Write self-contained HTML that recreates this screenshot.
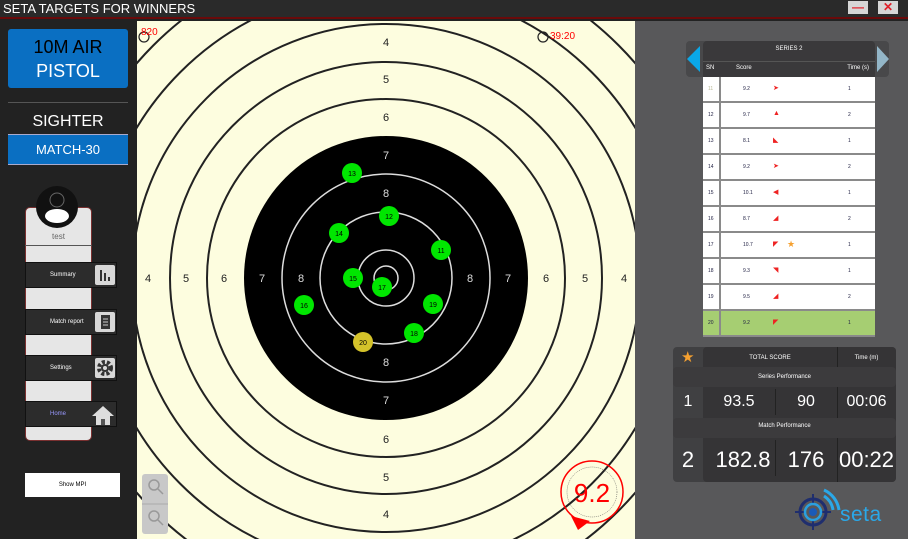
<!DOCTYPE html>
<html><head><meta charset="utf-8"><style>
*{margin:0;padding:0;box-sizing:border-box}
html,body{overflow:hidden}
body{width:908px;height:539px;background:#222;font-family:"Liberation Sans",sans-serif;position:relative}
.a{position:absolute}
.title{left:0;top:0;width:908px;height:19px;background:#2a2a2a;border-bottom:2px solid #6a0a0a;color:#fff;font-size:13px;line-height:17px;padding-left:3px}
.wb{top:1px;width:20px;height:13px;background:#d6d6d6;color:#e0202a;font-size:12px;line-height:13px;text-align:center;font-weight:bold}
.blue{background:#0a6fc2;color:#fff;text-align:center}
.btn{left:25px;width:92px;height:26px;background:#2c2c2c;border:1px solid #111;color:#fff;font-size:6px;line-height:24px;padding-left:24px}
.ic{position:absolute;right:1px;top:2px;width:20px;height:20px;background:#d8d8d8;border-radius:2px}
.row{left:703px;width:172px;height:26px;background:#fff;border-bottom:2px solid #8a8a8a;font-size:5px;color:#224}
.row span{position:absolute;top:9px}
.hd{background:#3a393b;color:#fff;font-size:6px;text-align:center}
.big{color:#fff;text-align:center;position:absolute}
</style></head><body>
<div class="a title">SETA TARGETS FOR WINNERS</div>
<div class="a wb" style="left:848px">—</div>
<div class="a wb" style="left:878px">✕</div>
<div class="a" style="left:0;top:21px;width:137px;height:518px;background:#222"></div>
<div class="a" style="left:635px;top:21px;width:273px;height:518px;background:#58585a"></div>

<div class="a blue" style="left:8px;top:29px;width:120px;height:59px;border-radius:3px;font-size:18px;line-height:24px;padding-top:6px"><span style="color:#000">10M AIR</span><br>PISTOL</div>
<div class="a" style="left:8px;top:102px;width:120px;height:1px;background:#555"></div>
<div class="a" style="left:8px;top:113px;width:120px;color:#fff;font-size:16px;text-align:center">SIGHTER</div>
<div class="a blue" style="left:8px;top:134px;width:120px;height:31px;border-top:1px solid #aac;border-bottom:1px solid #aac;font-size:13px;line-height:30px">MATCH-30</div>

<div class="a" style="left:25px;top:207px;width:67px;height:234px;background:#e6e6e6;border:1px solid #7a3030;border-radius:5px"></div>
<div class="a" style="left:25px;top:245px;width:67px;height:1px;background:#555"></div>
<svg class="a" style="left:35px;top:185px" width="44" height="44"><circle cx="22" cy="22" r="21" fill="#111"/><circle cx="22" cy="15" r="7" fill="#111" stroke="#666" stroke-width="1"/><ellipse cx="22" cy="31" rx="12" ry="7" fill="#fff"/></svg>
<div class="a" style="left:25px;top:232px;width:67px;text-align:center;color:#666;font-size:8px">test</div>
<div class="a btn" style="top:262px">Summary<div class="ic"><svg width="20" height="20"><rect x="5" y="5" width="2" height="11" fill="#333"/><rect x="9" y="8" width="2" height="8" fill="#333"/><rect x="13" y="12" width="2" height="4" fill="#333"/></svg></div></div>
<div class="a btn" style="top:309px">Match report<div class="ic"><svg width="20" height="20"><rect x="6" y="3" width="9" height="14" fill="#333"/><g stroke="#ccc"><line x1="8" y1="7" x2="13" y2="7"/><line x1="8" y1="10" x2="13" y2="10"/><line x1="8" y1="13" x2="13" y2="13"/></g></svg></div></div>
<div class="a btn" style="top:355px">Settings<div class="ic"><svg width="20" height="20"><circle cx="10" cy="10" r="6" fill="none" stroke="#333" stroke-width="4" stroke-dasharray="3 2"/><circle cx="10" cy="10" r="4" fill="#333"/><circle cx="10" cy="10" r="2" fill="#d8d8d8"/></svg></div></div>
<div class="a btn" style="top:401px;color:#99f">Home<div class="ic" style="background:none"><svg width="24" height="22" style="margin-left:-4px"><path d="M1 12 L12 2 L23 12 Z" fill="#ddd"/><rect x="5" y="11" width="14" height="10" fill="#ddd"/><rect x="10" y="15" width="4" height="6" fill="#555"/></svg></div></div>
<div class="a" style="left:25px;top:473px;width:95px;height:24px;background:#fff;font-size:6px;text-align:center;line-height:24px">Show MPI</div>

<svg class="a" style="left:137px;top:21px" width="498" height="518" viewBox="137 21 498 518">
<rect x="137" y="21" width="498" height="518" fill="#fdfddf"/>
<g fill="none" stroke="#222" stroke-width="2">
<circle cx="386" cy="278" r="366"/><circle cx="386" cy="278" r="329"/><circle cx="386" cy="278" r="291"/><circle cx="386" cy="278" r="254"/><circle cx="386" cy="278" r="216"/><circle cx="386" cy="278" r="179"/>
</g>
<circle cx="386" cy="278" r="142" fill="#000"/>
<g fill="none" stroke="#ddd" stroke-width="1.5">
<circle cx="386" cy="278" r="104"/><circle cx="386" cy="278" r="66"/><circle cx="386" cy="278" r="28"/><circle cx="386" cy="278" r="12"/>
</g>
<g font-size="11" text-anchor="middle" fill="#222">
<text x="386" y="46">4</text><text x="386" y="83">5</text><text x="386" y="121">6</text>
<text x="386" y="518">4</text><text x="386" y="481">5</text><text x="386" y="443">6</text>
<text x="148" y="282">4</text><text x="186" y="282">5</text><text x="224" y="282">6</text>
<text x="624" y="282">4</text><text x="585" y="282">5</text><text x="546" y="282">6</text>
</g>
<g font-size="11" text-anchor="middle" fill="#ddd">
<text x="386" y="159">7</text><text x="386" y="404">7</text><text x="262" y="282">7</text><text x="508" y="282">7</text>
<text x="386" y="197">8</text><text x="386" y="366">8</text><text x="301" y="282">8</text><text x="470" y="282">8</text>
</g>
<g fill="#00e600">
<circle cx="352" cy="173" r="10"/><circle cx="389" cy="216" r="10"/><circle cx="339" cy="233" r="10"/><circle cx="441" cy="250" r="10"/><circle cx="353" cy="278" r="10"/><circle cx="382" cy="287" r="10"/><circle cx="304" cy="305" r="10"/><circle cx="433" cy="304" r="10"/><circle cx="414" cy="333" r="10"/>
</g>
<circle cx="363" cy="342" r="10" fill="#d4c22a"/>
<g font-size="7" text-anchor="middle" fill="#000">
<text x="352" y="176">13</text><text x="389" y="219">12</text><text x="339" y="236">14</text><text x="441" y="253">11</text><text x="353" y="281">15</text><text x="382" y="290">17</text><text x="304" y="308">16</text><text x="433" y="307">19</text><text x="414" y="336">18</text><text x="363" y="345">20</text>
</g>
<g fill="none" stroke="#222" stroke-width="1.2"><circle cx="144" cy="37" r="5"/><circle cx="543" cy="37" r="5"/></g>
<text x="141" y="35" font-size="10" fill="#f00">820</text>
<text x="550" y="39" font-size="10" fill="#f00">39:20</text>
<circle cx="592" cy="492" r="31" fill="none" stroke="#f00" stroke-width="1.5"/>
<circle cx="592" cy="492" r="25" fill="none" stroke="#444" stroke-width="0.5" stroke-dasharray="1 1"/>
<path d="M571 516 L590 521 L578 530 Z" fill="#f00"/>
<text x="592" y="502" font-size="26" text-anchor="middle" fill="#f00">9.2</text>
<rect x="142" y="474" width="26" height="60" rx="3" fill="#c8c8c8"/>
<line x1="142" y1="504" x2="168" y2="504" stroke="#aaa"/>
<g fill="none" stroke="#999" stroke-width="1.5"><circle cx="154" cy="485" r="5"/><line x1="158" y1="489" x2="163" y2="494"/><circle cx="154" cy="516" r="5"/><line x1="158" y1="520" x2="163" y2="525"/></g>
</svg>

<div class="a" style="left:686px;top:41px;width:203px;height:36px;background:#48484a;border-radius:4px"></div>
<div class="a hd" style="left:703px;top:41px;width:172px;height:36px;border-radius:4px 4px 0 0"><div style="padding-top:5px">SERIES 2</div><div style="border-top:1px solid #555;margin-top:9px;text-align:left;padding-left:3px;position:relative;height:12px;line-height:12px">SN<span style="position:absolute;left:33px">Score</span><span style="position:absolute;right:6px">Time (s)</span></div></div>
<svg class="a" style="left:686px;top:46px" width="204" height="26"><path d="M14 0 L14 26 L1 13 Z" fill="#0aa8e8"/><path d="M191 0 L191 26 L203 13 Z" fill="#93b6c8"/></svg>
<div class="a" style="left:703px;top:77px;width:172px;height:259px;background:#fff"></div>
<div class="a row" style="top:77px"><span style="left:5px;color:#bb9">11</span><span style="left:40px">9.2</span><span style="left:70px;color:#e22;top:7px;font-size:7px">➤</span><span style="left:145px">1</span></div>
<div class="a row" style="top:103px"><span style="left:5px">12</span><span style="left:40px">9.7</span><span style="left:70px;color:#e22;top:7px;font-size:7px">▲</span><span style="left:145px">2</span></div>
<div class="a row" style="top:129px"><span style="left:5px">13</span><span style="left:40px">8.1</span><span style="left:70px;color:#e22;top:7px;font-size:7px">◣</span><span style="left:145px">1</span></div>
<div class="a row" style="top:155px"><span style="left:5px">14</span><span style="left:40px">9.2</span><span style="left:70px;color:#e22;top:7px;font-size:7px">➤</span><span style="left:145px">2</span></div>
<div class="a row" style="top:181px"><span style="left:5px">15</span><span style="left:40px">10.1</span><span style="left:70px;color:#e22;top:7px;font-size:7px">◀</span><span style="left:145px">1</span></div>
<div class="a row" style="top:207px"><span style="left:5px">16</span><span style="left:40px">8.7</span><span style="left:70px;color:#e22;top:7px;font-size:7px">◢</span><span style="left:145px">2</span></div>
<div class="a row" style="top:233px"><span style="left:5px">17</span><span style="left:40px">10.7</span><span style="left:70px;color:#e22;top:7px;font-size:7px">◤</span><span style="left:84px;color:#f5a030;top:6px;font-size:9px">★</span><span style="left:145px">1</span></div>
<div class="a row" style="top:259px"><span style="left:5px">18</span><span style="left:40px">9.3</span><span style="left:70px;color:#e22;top:7px;font-size:7px">◥</span><span style="left:145px">1</span></div>
<div class="a row" style="top:285px"><span style="left:5px">19</span><span style="left:40px">9.5</span><span style="left:70px;color:#e22;top:7px;font-size:7px">◢</span><span style="left:145px">2</span></div>
<div class="a row" style="top:311px;background:#a6ce72"><span style="left:5px">20</span><span style="left:40px">9.2</span><span style="left:70px;color:#e22;top:7px;font-size:7px">◤</span><span style="left:145px">1</span></div>
<div class="a" style="left:719px;top:77px;width:2px;height:259px;background:#8a8a8a"></div>

<div class="a" style="left:673px;top:347px;width:223px;height:135px;background:#404042;border-radius:4px"></div>
<div class="a" style="left:703px;top:347px;width:193px;height:135px;background:#353436;border-radius:4px"></div>
<div class="a" style="left:681px;top:348px;color:#f5a030;font-size:15px">★</div>
<div class="a hd" style="left:703px;top:355px;width:134px;background:none">TOTAL SCORE</div>
<div class="a hd" style="left:837px;top:355px;width:59px;background:none">Time (m)</div>
<div class="a" style="left:837px;top:347px;width:1px;height:20px;background:#222"></div>
<div class="a hd" style="left:673px;top:367px;width:223px;height:20px;line-height:20px;background:#3c3b3d;border-radius:4px">Series Performance</div>
<div class="big" style="left:673px;top:393px;width:30px;font-size:16px">1</div>
<div class="big" style="left:703px;top:393px;width:72px;font-size:16px">93.5</div>
<div class="big" style="left:775px;top:393px;width:62px;font-size:16px">90</div>
<div class="big" style="left:837px;top:393px;width:59px;font-size:16px">00:06</div>
<div class="a" style="left:775px;top:389px;width:1px;height:26px;background:#222"></div>
<div class="a" style="left:837px;top:387px;width:1px;height:31px;background:#222"></div>
<div class="a hd" style="left:673px;top:418px;width:223px;height:20px;line-height:16px;background:#3c3b3d;border-radius:4px">Match Performance</div>
<div class="big" style="left:673px;top:447px;width:30px;font-size:22px">2</div>
<div class="big" style="left:703px;top:447px;width:80px;font-size:22px">182.8</div>
<div class="big" style="left:775px;top:447px;width:62px;font-size:22px">176</div>
<div class="big" style="left:837px;top:447px;width:59px;font-size:22px">00:22</div>
<div class="a" style="left:775px;top:440px;width:1px;height:36px;background:#222"></div>
<div class="a" style="left:837px;top:438px;width:1px;height:44px;background:#222"></div>

<svg class="a" style="left:793px;top:488px" width="110" height="46">
<g stroke="#1f2e6e" stroke-width="2"><line x1="20" y1="6" x2="20" y2="42"/><line x1="2" y1="24" x2="38" y2="24"/></g>
<circle cx="20" cy="24" r="13" fill="none" stroke="#1f2e6e" stroke-width="3"/>
<circle cx="20" cy="24" r="8" fill="#58585a" stroke="#2aa0e0" stroke-width="2.5"/>
<circle cx="20" cy="24" r="4" fill="#1a5ab8"/>
<g fill="none" stroke="#2aa8e8"><path d="M31 8 A20 20 0 0 1 40 22" stroke-width="3"/><path d="M31 2 A26 26 0 0 1 46 22" stroke-width="3"/></g>
<text x="47" y="33" font-size="21" fill="#2aa8e8" style="letter-spacing:0.5px">seta</text>
</svg>
</body></html>
